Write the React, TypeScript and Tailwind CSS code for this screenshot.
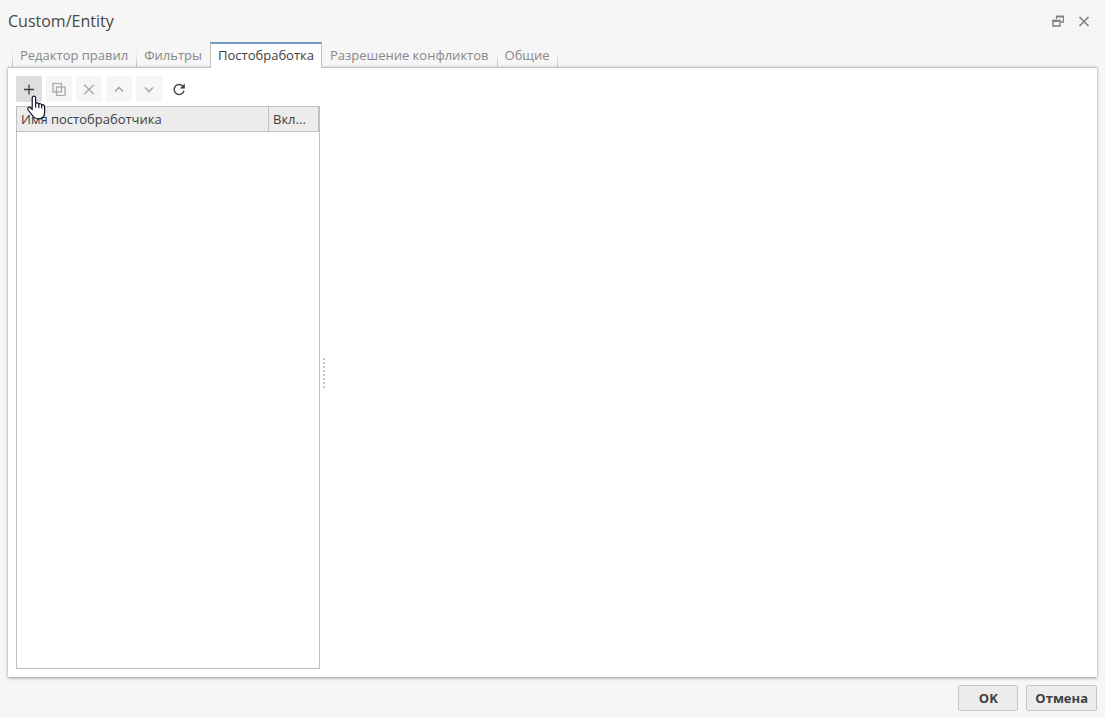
import { useState } from 'react';
import type { ReactNode } from 'react';

const TABS = [
  'Редактор правил',
  'Фильтры',
  'Постобработка',
  'Разрешение конфликтов',
  'Общие',
];

type ToolButtonProps = {
  label: string;
  look: string;
  disabled?: boolean;
  children: ReactNode;
};

function ToolButton({ label, look, disabled, children }: ToolButtonProps) {
  return (
    <button
      type="button"
      aria-label={label}
      disabled={disabled}
      className={`flex h-[26px] w-[26px] items-center justify-center rounded-[2px] ${look}`}
    >
      {children}
    </button>
  );
}

function HandCursor() {
  return (
    <svg
      className="pointer-events-none absolute left-[11px] top-[19px] z-10 h-[25px] w-[19px]"
      viewBox="0 0 19 25"
      fill="#fff"
      stroke="#15152a"
      strokeWidth="1.2"
      strokeLinejoin="round"
      strokeLinecap="round"
      aria-hidden="true"
    >
      <path d="M5.2 14.5V3C5.2 1.8 6 1.2 6.9 1.2s1.7.6 1.7 1.800v5.400c.3-.7 2.900-.8 3.200.8.6-.8 2.600-.6 2.900.9.7-.7 2.900-.4 2.900 1.600v5.800c0 4-2.600 6.300-6.200 6.300-3.100 0-4.700-1.300-6-3.500L1.200 15C.5 13.700.7 12.800 1.400 12.400c.8-.5 1.800-.2 2.500.6z" />
      <path d="M8.600 8.400v3.800M11.800 9.200v3.400M14.700 10.200v2.800" fill="none" />
    </svg>
  );
}

export default function App() {
  const [active, setActive] = useState(2);

  return (
    <div className="flex min-h-screen flex-col bg-[#f6f6f6] px-2 pb-[7px] font-['Open_Sans','Noto_Sans',sans-serif] text-[13px] leading-[18px] text-[#404040]">
      {/* Window title */}
      <header className="flex h-[42px] items-center justify-between">
        <h1 className="text-base text-[#484848]">Custom/Entity</h1>
        <div className="flex items-center gap-3 pr-[6px] text-[#808080]">
          <button type="button" aria-label="Восстановить" className="flex h-4 w-[14px] items-center justify-center">
            <svg width="12" height="12" viewBox="0 0 12 12" fill="none" stroke="currentColor" aria-hidden="true">
              <path d="M4.500 4V1.500h7v5.500H9" strokeWidth="1.300" />
              <path d="M4 1.500h8" strokeWidth="1.600" />
              <path d="M1 5.500h7v5.500h-7z" strokeWidth="1.400" />
              <path d="M.5 6h8" strokeWidth="2" />
            </svg>
          </button>
          <button type="button" aria-label="Закрыть" className="flex h-4 w-[14px] items-center justify-center">
            <svg width="12" height="12" viewBox="0 0 12 12" fill="none" stroke="currentColor" strokeWidth="1.700" aria-hidden="true">
              <path d="M1.500 2l9 9M10.500 2l-9 9" />
            </svg>
          </button>
        </div>
      </header>

      {/* Tabs, the active one covers the top border of the panel */}
      <div role="tablist" className="relative z-10 -mb-px flex h-[26px] pl-1">
        {TABS.map((tab, i) => (
          <button
            key={tab}
            type="button"
            role="tab"
            aria-selected={i === active}
            onClick={() => setActive(i)}
            className={
              i === active
                ? 'border-x border-t-2 border-x-[#c0c0c0] border-t-[#7096c4] bg-white px-[7px] pb-[2px] text-[#404040]'
                : 'relative px-2 pt-[2px] pb-[2px] text-[#888]'
            }
          >
            {tab}
            {i !== active && i !== active + 1 && (
              <span className="absolute bottom-px left-0 h-4 w-px bg-linear-to-b from-transparent to-[#c0c0c0]" />
            )}
            {i === TABS.length - 1 && (
              <span className="absolute right-0 bottom-px h-4 w-px bg-linear-to-b from-transparent to-[#c0c0c0]" />
            )}
          </button>
        ))}
      </div>

      <main className="flex flex-1 flex-col border-t border-[#c0c0c0] bg-white p-2 shadow-[0_1px_3px_rgba(0,0,0,0.4)]">
        <div role="toolbar" className="flex gap-1">
          <div className="relative">
            <ToolButton label="Добавить" look="bg-[#dedede] text-[#404040]">
              <svg width="12" height="12" viewBox="0 0 12 12" stroke="currentColor" strokeWidth="1.300" aria-hidden="true">
                <path d="M6 1.500v10M1 6.500h10" />
              </svg>
            </ToolButton>
            <HandCursor />
          </div>
          <ToolButton label="Копировать" look="bg-[#f6f6f6] text-[#aaa]" disabled>
            <svg width="14" height="14" viewBox="0 0 14 14" fill="none" stroke="currentColor" strokeWidth="1.300" aria-hidden="true">
              <rect x="1" y="1.500" width="8.500" height="8.500" />
              <rect x="4.500" y="5" width="8.500" height="8.500" />
            </svg>
          </ToolButton>
          <ToolButton label="Удалить" look="bg-[#f6f6f6] text-[#aaa]" disabled>
            <svg width="12" height="12" viewBox="0 0 12 12" stroke="currentColor" strokeWidth="1.400" aria-hidden="true">
              <path d="M1.200 1.700l9.600 9.600M10.800 1.700l-9.600 9.600" />
            </svg>
          </ToolButton>
          <ToolButton label="Вверх" look="bg-[#f6f6f6] text-[#aaa]" disabled>
            <svg width="12" height="12" viewBox="0 0 12 12" fill="none" stroke="currentColor" strokeWidth="1.600" aria-hidden="true">
              <path d="M2 8.500l4-4 4 4" />
            </svg>
          </ToolButton>
          <ToolButton label="Вниз" look="bg-[#f6f6f6] text-[#aaa]" disabled>
            <svg width="12" height="12" viewBox="0 0 12 12" fill="none" stroke="currentColor" strokeWidth="1.600" aria-hidden="true">
              <path d="M2 4.500l4 4 4-4" />
            </svg>
          </ToolButton>
          <ToolButton label="Обновить" look="text-[#404040]">
            <svg width="14" height="14" viewBox="0 0 14 14" fill="none" stroke="currentColor" strokeWidth="1.400" aria-hidden="true">
              <path d="M11.200 4.500A5 5 0 1 0 12 8.800" />
              <path d="M12.800 1.500v5H7.800z" fill="currentColor" stroke="none" />
            </svg>
          </ToolButton>
        </div>

        <div className="mt-1 flex flex-1">
          <div className="w-[304px] border border-[#c0c0c0]">
            <table className="w-full table-fixed border-separate border-spacing-0 text-left">
              <thead>
                <tr className="h-[25px] bg-[#ececec]">
                  <th className="border-r border-b border-[#c0c0c0] px-1 font-normal">Имя постобработчика</th>
                  <th className="w-[50px] border-r border-b border-[#c0c0c0] px-1 font-normal">Вкл...</th>
                </tr>
              </thead>
              <tbody />
            </table>
          </div>

          {/* Splitter handle */}
          <div role="separator" aria-orientation="vertical" className="flex w-2 flex-col items-center justify-center gap-[2px] pb-[30px]">
            {Array.from({ length: 8 }, (_, i) => (
              <span key={i} className="h-[2px] w-[2px] bg-[#c8c8c8]" />
            ))}
          </div>
          <div className="flex-1" />
        </div>
      </main>

      <footer className="mt-2 flex justify-end gap-2">
        <button type="button" className="h-[26px] w-[60px] rounded-[2px] border border-[#c6c6c6] bg-[#ececec] font-bold">
          OK
        </button>
        <button type="button" className="h-[26px] rounded-[2px] border border-[#c6c6c6] bg-[#ececec] px-2 font-bold">
          Отмена
        </button>
      </footer>
    </div>
  );
}
